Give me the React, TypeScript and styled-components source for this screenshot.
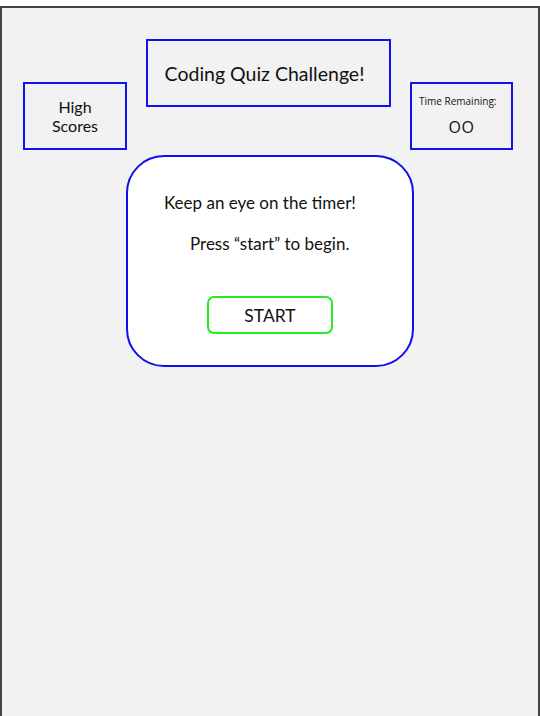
import styled, { createGlobalStyle } from 'styled-components'

const Global = createGlobalStyle`
  html, body {
    margin: 0;
    padding: 0;
    background: #ffffff;
  }
  body {
    font-family: Lato, "Open Sans", sans-serif;
    color: #111;
  }
`

const Frame = styled.div`
  margin-top: 6px;
  height: 710px;
  box-sizing: border-box;
  border: 2px solid #444444;
  border-bottom: none;
  background: #f2f2f2;
  padding: 31px 0 0 21px;
`

const Header = styled.header`
  display: flex;
  align-items: flex-start;
  gap: 19px;
`

const Box = styled.div<{ $w: number; $top?: number }>`
  box-sizing: border-box;
  width: ${(p) => p.$w}px;
  height: 68px;
  margin-top: ${(p) => p.$top || 0}px;
  border: 2px solid #1010ee;
  display: flex;
  flex-direction: column;
  align-items: center;
  justify-content: center;
  text-align: center;
`

const Title = styled.h1`
  margin: 0 8px 0 0;
  font-size: 19.5px;
  font-weight: 400;
`

const SideText = styled.div`
  font-size: 16px;
  line-height: 19px;
`

const TimerLabel = styled.div`
  font-family: "Open Sans", sans-serif;
  font-size: 10px;
  align-self: flex-start;
  margin: 0 0 0 7px;
`

const TimerValue = styled.div`
  font-family: "Open Sans", sans-serif;
  font-size: 16px;
  margin-top: 8px;
  letter-spacing: 0.5px;
`

const Card = styled.main`
  box-sizing: border-box;
  width: 288px;
  height: 212px;
  margin: 5px 0 0 103px;
  background: #ffffff;
  border: 2px solid #1010ee;
  border-radius: 38px;
  padding-top: 35px;
`

const Message = styled.p<{ $indent: number }>`
  margin: 0 0 19px;
  padding-left: ${(p) => p.$indent}px;
  font-size: 17px;
  line-height: 22px;
`

const StartButton = styled.button`
  display: block;
  box-sizing: border-box;
  width: 126px;
  height: 38px;
  margin: 41px auto 0;
  background: #ffffff;
  border: 2px solid #22ee22;
  border-radius: 7px;
  font-family: Lato, "Open Sans", sans-serif;
  font-size: 17.5px;
  color: #111;
  padding: 0;
`

export default function App() {
  return (
    <>
      <Global />
      <Frame>
        <Header>
          <Box $w={104} $top={43}>
            <SideText>High<br />Scores</SideText>
          </Box>
          <Box $w={245}>
            <Title>Coding Quiz Challenge!</Title>
          </Box>
          <Box $w={103} $top={43}>
            <TimerLabel>Time Remaining:</TimerLabel>
            <TimerValue>OO</TimerValue>
          </Box>
        </Header>
        <Card>
          <Message $indent={36}>Keep an eye on the timer!</Message>
          <Message $indent={62}>Press “start” to begin.</Message>
          <StartButton>START</StartButton>
        </Card>
      </Frame>
    </>
  )
}
